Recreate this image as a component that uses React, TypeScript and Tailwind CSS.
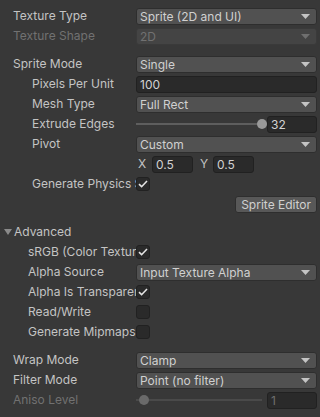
import React from 'react'

const font = { fontFamily: 'Inter, "Noto Sans", sans-serif' }

const Arrow = ({ dim }: { dim?: boolean }) => (
  <svg width="9" height="5" viewBox="0 0 9 5" className="shrink-0">
    <path d="M0 0H9L4.5 5Z" fill={dim ? '#6f6f6f' : '#c4c4c4'} />
  </svg>
)

const Dropdown = ({ value, disabled }: { value: string; disabled?: boolean }) => (
  <div
    className={`flex h-[17px] w-full items-center justify-between rounded-[3px] border pl-[3px] pr-[6px] ${
      disabled
        ? 'border-[#3a3a3a] bg-[#444444] text-[#717171]'
        : 'border-[#2e2e2e] bg-[#515151] text-[#d0d0d0]'
    }`}
  >
    <span className="whitespace-nowrap leading-[15px]">{value}</span>
    <Arrow dim={disabled} />
  </div>
)

const Field = ({ value, className = '', dim }: { value: string; className?: string; dim?: boolean }) => (
  <div
    className={`flex h-[17px] items-center rounded-[3px] border border-[#212121] bg-[#2a2a2a] pl-[3px] leading-[15px] ${
      dim ? 'text-[#6f6f6f]' : 'text-[#d2d2d2]'
    } ${className}`}
  >
    {value}
  </div>
)

const Check = ({ checked }: { checked?: boolean }) => (
  <div className="flex h-[14px] w-[14px] items-center justify-center rounded-[3px] border border-[#212121] bg-[#2a2a2a]">
    {checked && (
      <svg width="10" height="8" viewBox="0 0 10 8">
        <path d="M1 4.2L3.6 6.7L9 1" stroke="#e4e4e4" strokeWidth="1.6" fill="none" />
      </svg>
    )}
  </div>
)

const Slider = ({ pos, value, disabled }: { pos: number; value: string; disabled?: boolean }) => (
  <div className="flex w-full items-center gap-[5px]">
    <div className="relative h-[10px] flex-1">
      <div className={`absolute left-0 right-0 top-[4px] h-[2px] ${disabled ? 'bg-[#4a4a4a]' : 'bg-[#5e5e5e]'}`} />
      <div
        className={`absolute top-0 h-[10px] w-[10px] rounded-full ${disabled ? 'bg-[#6a6a6a]' : 'bg-[#999999]'}`}
        style={{ left: `calc(${pos}% - 5px)` }}
      />
    </div>
    <Field value={value} className="w-[50px]" dim={disabled} />
  </div>
)

const Row = ({
  label,
  indent = 0,
  disabled,
  children,
}: {
  label?: string
  indent?: number
  disabled?: boolean
  children?: React.ReactNode
}) => (
  <div className="flex h-5 items-center">
    <div
      className={`w-[123px] shrink-0 overflow-hidden whitespace-nowrap leading-[16px] ${
        disabled ? 'text-[#717171]' : 'text-[#c4c4c4]'
      }`}
      style={{ paddingLeft: indent }}
    >
      {label}
    </div>
    <div className="flex min-w-0 flex-1 items-center">{children}</div>
  </div>
)

export default function App() {
  return (
    <div className="h-[417px] w-[320px] bg-[#383838] pl-[13px] pr-[3px] pt-[6px] text-[12px]" style={font}>
      <Row label="Texture Type">
        <Dropdown value="Sprite (2D and UI)" />
      </Row>
      <Row label="Texture Shape" disabled>
        <Dropdown value="2D" disabled />
      </Row>

      <div className="h-2" />
      <Row label="Sprite Mode">
        <Dropdown value="Single" />
      </Row>
      <Row label="Pixels Per Unit" indent={19}>
        <Field value="100" className="w-full" />
      </Row>
      <Row label="Mesh Type" indent={19}>
        <Dropdown value="Full Rect" />
      </Row>
      <Row label="Extrude Edges" indent={19}>
        <Slider pos={100} value="32" />
      </Row>
      <Row label="Pivot" indent={19}>
        <Dropdown value="Custom" />
      </Row>
      <Row indent={19}>
        <span className="ml-[2px] w-[14px] text-[#c4c4c4]">X</span>
        <Field value="0.5" className="w-[41px]" />
        <span className="ml-[7px] w-[13px] text-[#c4c4c4]">Y</span>
        <Field value="0.5" className="w-[41px]" />
      </Row>
      <Row label="Generate Physics Shape" indent={19}>
        <Check checked />
      </Row>
      <div className="flex h-5 items-center justify-end">
        <button className="flex h-[17px] items-center rounded-[3px] border border-[#2e2e2e] bg-[#585858] px-[5px] leading-[15px] text-[#d0d0d0]">
          Sprite Editor
        </button>
      </div>

      <div className="h-2" />
      <div className="-ml-[9px] flex h-5 items-center gap-[1px] text-[#c4c4c4]">
        <svg width="9" height="8" viewBox="0 0 9 8">
          <path d="M0 1H8L4 7Z" fill="#8a8a8a" />
        </svg>
        <span className="leading-[16px]">Advanced</span>
      </div>
      <Row label="sRGB (Color Texture)" indent={15}>
        <Check checked />
      </Row>
      <Row label="Alpha Source" indent={15}>
        <Dropdown value="Input Texture Alpha" />
      </Row>
      <Row label="Alpha Is Transparency" indent={15}>
        <Check checked />
      </Row>
      <Row label="Read/Write" indent={15}>
        <Check />
      </Row>
      <Row label="Generate Mipmaps" indent={15}>
        <Check />
      </Row>

      <div className="h-2" />
      <Row label="Wrap Mode">
        <Dropdown value="Clamp" />
      </Row>
      <Row label="Filter Mode">
        <Dropdown value="Point (no filter)" />
      </Row>
      <Row label="Aniso Level" disabled>
        <Slider pos={6} value="1" disabled />
      </Row>
    </div>
  )
}
